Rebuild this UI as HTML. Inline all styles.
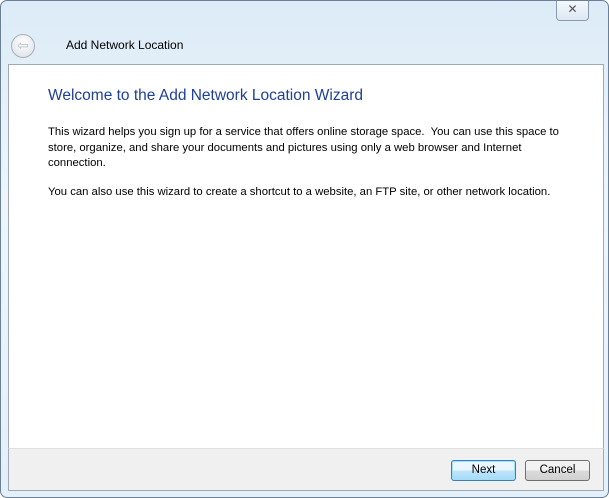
<!DOCTYPE html>
<html><head><style>
body{margin:0;width:609px;height:498px;overflow:hidden;font-family:"Liberation Sans",sans-serif;}
.win{position:absolute;left:0;top:0;width:607px;height:496px;border:1px solid #6b7f96;border-radius:7px;background:linear-gradient(180deg,#dcebf7 0%,#eef6fc 40%,#e3eff9 100%);}
.close{position:absolute;left:555px;top:0;width:31px;height:19px;border:1px solid #8a9bb0;border-top:none;border-radius:0 0 4px 4px;background:linear-gradient(#f4f8fc,#dde8f3);font-size:12px;text-align:center;line-height:17px;color:#555;}
.back{position:absolute;left:10px;top:33px;width:22px;height:22px;border-radius:50%;border:1px solid #a7b0ba;background:radial-gradient(circle at 50% 35%,#fff,#d9dee4);color:#b6bcc4;font-size:14px;line-height:21px;text-align:center;}
.ttl{position:absolute;left:65px;top:37px;font-size:12px;color:#000;}
.content{position:absolute;left:7px;top:63px;width:594px;height:384px;background:#fff;border:1px solid #a0aab6;border-bottom:none;}
.footer{position:absolute;left:7px;top:447px;width:594px;height:41px;background:#f0f0f0;border:1px solid #a0aab6;border-top:1px solid #dfdfdf;}
h1{position:absolute;left:39px;top:22px;margin:0;font-weight:normal;font-size:15.5px;color:#1e3f9a;}
p{position:absolute;left:39px;margin:0;font-size:11.3px;line-height:15.5px;color:#000;width:522px;}
.btn{position:absolute;top:11px;width:63px;height:19px;border:1px solid #707070;border-radius:3px;background:linear-gradient(#f2f2f2 50%,#dcdcdc 50%,#d0d0d0);font-size:11.5px;text-align:center;line-height:19px;}
.next{left:442px;border-color:#3c7fb1;background:linear-gradient(#eaf6fd 50%,#bee6fd 50%,#a7d9f5);box-shadow:inset 0 0 0 1px #9ee0fa;}
.cancel{left:516px;}
</style></head><body>
<div class="win">
<div class="close">✕</div>
<div class="back">⇦</div>
<div class="ttl">Add Network Location</div>
<div class="content">
<h1>Welcome to the Add Network Location Wizard</h1>
<p style="top:60px">This wizard helps you sign up for a service that offers online storage space.&nbsp; You can use this space to store, organize, and share your documents and pictures using only a web browser and Internet connection.</p>
<p style="top:120px;width:560px">You can also use this wizard to create a shortcut to a website, an FTP site, or other network location.</p>
</div>
<div class="footer">
<div class="btn next">Next</div>
<div class="btn cancel">Cancel</div>
</div>
</div>
</body></html>
